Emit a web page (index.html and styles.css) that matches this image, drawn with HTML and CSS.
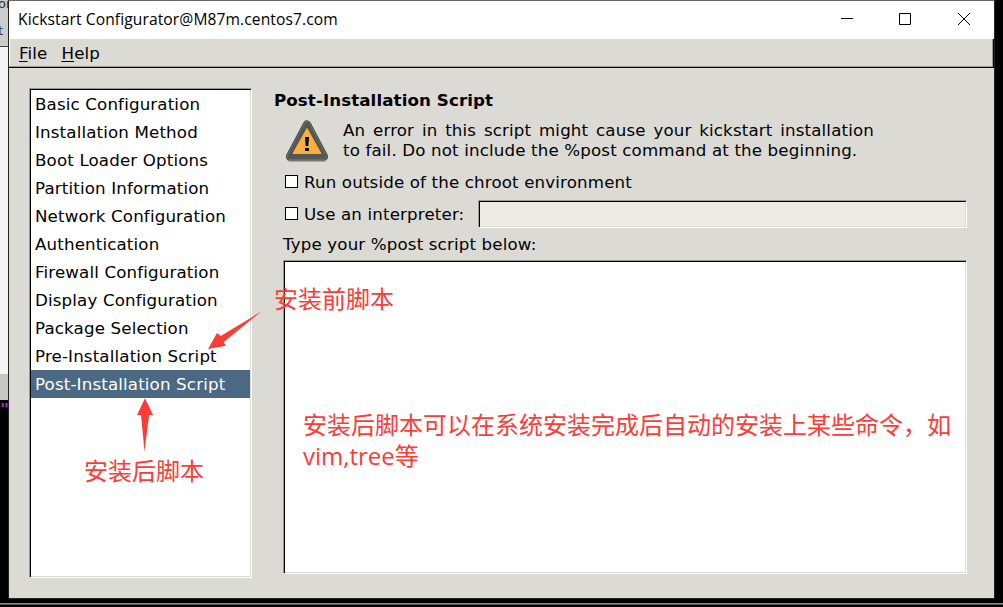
FILE: index.html
```html
<!DOCTYPE html>
<html lang="en">
<head>
    <meta charset="UTF-8">
    <meta name="viewport" content="width=device-width, initial-scale=1.0">
    <title>Kickstart Configurator</title>
    <link rel="stylesheet" href="styles.css">
</head>
<body>
    <div class="desktop">
        <div class="back-window">
            <div class="back-head">
                <div>or</div>
                <div>t s</div>
            </div>
            <div class="back-page"></div>
            <div class="back-foot"></div>
            <div class="back-terminal">"</div>
        </div>
        <div class="taskbar-line"></div>

        <div class="window">
            <div class="titlebar">
                <div class="title">Kickstart Configurator@M87m.centos7.com</div>
                <div class="controls">
                    <svg class="minimize" width="12" height="13" viewBox="0 0 12 13"><path d="M0 5.5h12" stroke="#000"/></svg>
                    <svg width="12" height="13" viewBox="0 0 12 13"><path d="M.5 .5h11v11h-11z" fill="none" stroke="#000"/></svg>
                    <svg width="12" height="13" viewBox="0 0 12 13"><path d="M0 0l12 12M12 0l-12 12" stroke="#000"/></svg>
                </div>
            </div>
            <div class="menubar">
                <div class="menu-item"><u>F</u>ile</div>
                <div class="menu-item"><u>H</u>elp</div>
            </div>
            <div class="content">
                <div class="list inset">
                    <div class="row">Basic Configuration</div>
                    <div class="row">Installation Method</div>
                    <div class="row">Boot Loader Options</div>
                    <div class="row">Partition Information</div>
                    <div class="row">Network Configuration</div>
                    <div class="row">Authentication</div>
                    <div class="row">Firewall Configuration</div>
                    <div class="row">Display Configuration</div>
                    <div class="row">Package Selection</div>
                    <div class="row">Pre-Installation Script</div>
                    <div class="row selected">Post-Installation Script</div>
                </div>
                <div class="panel">
                    <div class="heading">Post-Installation Script</div>
                    <div class="warning">
                        <svg class="warning-icon" width="44" height="44" viewBox="0 0 44 44">
                            <path d="M2 39h40q1 3-3 4h-34q-4-1-3-4z" fill="#a9aaa5"/>
                            <path d="M22 5.500L39 37.500H5z" fill="#555753" stroke="#3c3e3b" stroke-width="8" stroke-linejoin="round"/>
                            <path d="M22 5.500L39 37.500H5z" fill="#555753" stroke="#7a7c77" stroke-width="6.500" stroke-linejoin="round"/>
                            <path d="M22 5.500L39 37.500H5z" fill="#555753" stroke="#555753" stroke-width="5" stroke-linejoin="round"/>
                            <path d="M22 9.500L36 34.500H8z" fill="#fcaf3e" stroke="#fcaf3e" stroke-linejoin="round"/>
                            <path d="M20 18h4l-.7 9h-2.600zM20 29h4v3h-4z" fill="#000"/>
                        </svg>
                        <div class="warning-text">
                            <div class="spread">An error in this script might cause your kickstart installation</div>
                            <div>to fail. Do not include the %post command at the beginning.</div>
                        </div>
                    </div>
                    <div class="option chroot">
                        <span class="checkbox"></span>
                        <span class="option-text">Run outside of the chroot environment</span>
                    </div>
                    <div class="option interpreter">
                        <span class="checkbox"></span>
                        <span class="option-text option-label">Use an interpreter:</span>
                        <div class="entry inset"></div>
                    </div>
                    <div class="script-label">Type your %post script below:</div>
                    <div class="script inset"></div>
                </div>
            </div>
        </div>

        <!-- red notes on top of the window -->
        <svg class="arrows" width="1003" height="607" viewBox="0 0 1003 607" fill="#ff3b38">
            <path d="M262 311L223.700 342L225.700 345.700L208 349L217 333L220.700 336z"/>
            <path d="M145 398.300L153 415H149L144.500 451.500L141 415H137z"/>
        </svg>
        <div class="note note-pre" lang="zh">安装前脚本</div>
        <div class="note note-post" lang="zh">安装后脚本</div>
        <div class="note note-about" lang="zh">安装后脚本可以在系统安装完成后自动的安装上某些命令，如<br><span class="latin">vim,tree</span>等</div>
    </div>
</body>
</html>
```
FILE: styles.css
```css
* {
    box-sizing: border-box;
}
body {
    margin: 0;
    background-color: #000;
    color: #000;
    font-family: "DejaVu Sans", sans-serif;
    font-size: 16.67px;
    letter-spacing: 0.15px;
    line-height: 20px;
}
.desktop {
    position: relative;
    width: 1003px;
    height: 607px;
    overflow: hidden;
    background-color: #000;
}
.back-window {
    width: 8px;
    height: 600px;
    overflow: hidden;
    white-space: nowrap;
}
.back-head {
    height: 47px;
    background-color: #ccccc8;
    border-bottom: 1px solid #444;
    color: #333;
    font-size: 13px;
    line-height: 26px;
    text-indent: -2px;
}
.back-head div:first-child {
    height: 18px;
    line-height: 8px;
}
.back-page {
    height: 327px;
    background-color: #f5f5f5;
}
.back-foot {
    height: 26px;
    background-color: #c8c8c4;
}
.back-terminal {
    color: #b030d0;
    font-family: "DejaVu Sans Mono", monospace;
    font-weight: bold;
    font-size: 15px;
}
.taskbar-line {
    height: 2px;
    margin-top: 3px;
    background-color: #8a8a8a;
    border-bottom: 1px solid #555;
}
.window {
    position: absolute;
    left: 8px;
    top: 0;
    width: 987px;
    height: 599px;
    border: 1px solid #222;
    border-top-color: #666;
    background-color: #dbdad5;
}
.titlebar {
    display: flex;
    justify-content: space-between;
    height: 38px;
    background-color: #fff;
}
.title {
    padding-left: 9px;
    font-family: "Open Sans", "Noto Sans", sans-serif;
    font-size: 15.6px;
    letter-spacing: 0.1px;
    line-height: 37px;
}
.controls {
    display: flex;
    gap: 47px;
    padding: 12px 24px 0 0;
}
.minimize {
    margin-right: -1px;
}
.menubar {
    display: flex;
    gap: 14px;
    height: 29px;
    padding: 5px 10px 0;
    border-right: 1px solid #000;
    border-bottom: 1px solid #000;
    box-shadow: inset -1px -1px #9c9a8f, inset 1px 0 #fff;
}
.menu-item u {
    text-underline-offset: 2px;
    text-decoration-thickness: 1px;
}
.content {
    display: flex;
    gap: 22px;
    padding: 20px 27px 0 20px;
}
.inset {
    border: 1px solid;
    border-color: #9c9a8f #fff #fff #9c9a8f;
    box-shadow: inset 1px 1px #000, inset -1px -1px #dbdad5;
    background-color: #fff;
}
.list {
    width: 223px;
    height: 490px;
    padding: 1px;
    flex-shrink: 0;
}
.row {
    height: 28px;
    padding-left: 4px;
    line-height: 30px;
    white-space: nowrap;
}
.row.selected {
    background-color: #4b6983;
    color: #fff;
}
.panel {
    flex: 1;
    padding-top: 3px;
}
.heading {
    font-weight: bold;
    letter-spacing: 0.1px;
}
.warning {
    display: flex;
    gap: 14px;
    height: 53px;
    padding: 8px 0 0 11px;
}
.warning-text {
    width: 531px;
    padding-top: 2px;
    white-space: nowrap;
}
.spread {
    text-align-last: justify;
}
.option {
    display: flex;
    align-items: center;
    height: 28px;
    padding-left: 11px;
}
.interpreter {
    margin-top: 4px;
}
.chroot {
    margin-top: 4px;
}
.checkbox {
    width: 13px;
    height: 13px;
    margin: 0 6px 1px 0;
    border: 1px solid #000;
    background-color: #fff;
}
.option-text {
    padding-top: 2px;
}
.option-label {
    width: 174px;
}
.entry {
    flex: 1;
    height: 28px;
    background-color: #eeebe7;
}
.script-label {
    padding-left: 9px;
    margin-top: 7px;
    height: 25px;
}
.script {
    height: 314px;
    margin-left: 9px;
}
.arrows {
    position: absolute;
    left: 0;
    top: 0;
}
.note {
    position: absolute;
    color: #ff3b38;
    font-family: "Noto Sans CJK SC", sans-serif;
    font-size: 24px;
    letter-spacing: 0;
    line-height: 31px;
    white-space: nowrap;
}
.note-pre {
    left: 274px;
    top: 282px;
}
.note-post {
    left: 84px;
    top: 454px;
}
.note-about {
    left: 303px;
    top: 408px;
}
.latin {
    font-family: "Open Sans", "Noto Sans", sans-serif;
}
```
